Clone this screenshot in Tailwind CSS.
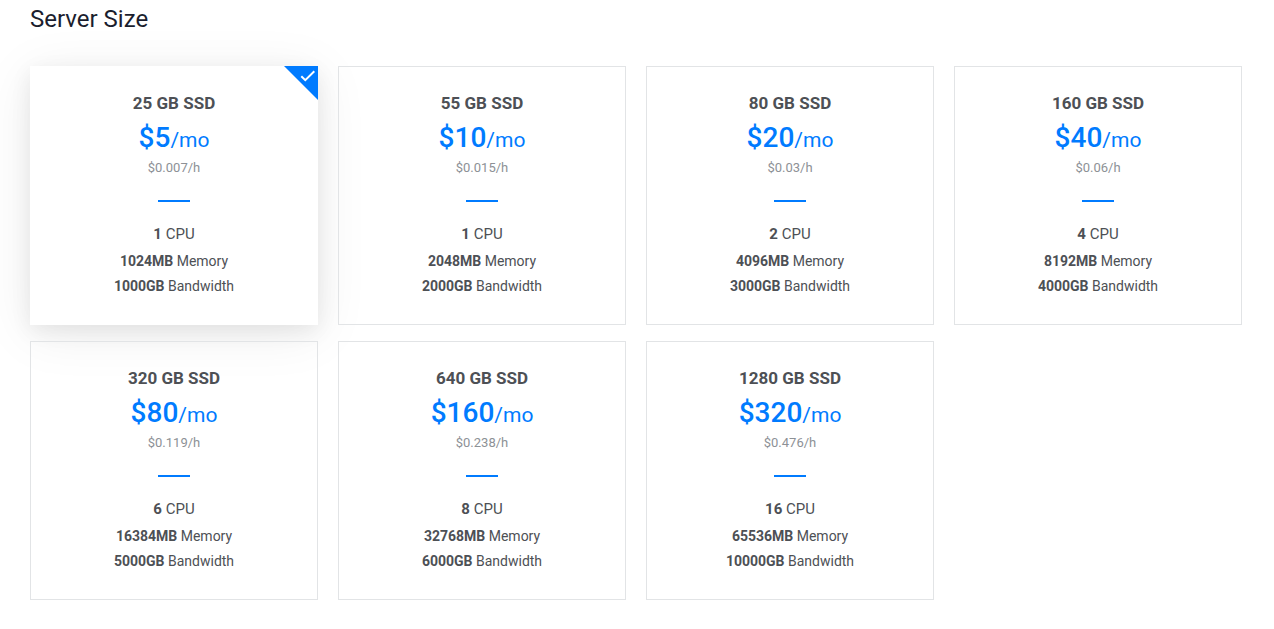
<!DOCTYPE html>
<html lang="en">
<head>
    <meta charset="UTF-8">
    <meta name="viewport" content="width=device-width, initial-scale=1.0">
    <title>Server Size</title>
    <script src="https://cdn.jsdelivr.net/npm/@tailwindcss/browser@4"></script>
</head>
<body class="bg-white font-[Roboto,sans-serif] text-[#4d5055]">
    <form class="pl-[30px] pr-8 pt-1 pb-7">
        <fieldset>
            <legend class="text-2xl leading-[30px] text-[#1b1e2e] mb-8">Server Size</legend>
            <div id="plans" class="grid grid-cols-4 gap-x-5 gap-y-4"></div>
        </fieldset>
    </form>

    <script>
        const plans = [
            { disk: 25, price: 5, hourly: '0.007', cpu: 1, memory: 1024, bandwidth: 1000 },
            { disk: 55, price: 10, hourly: '0.015', cpu: 1, memory: 2048, bandwidth: 2000 },
            { disk: 80, price: 20, hourly: '0.03', cpu: 2, memory: 4096, bandwidth: 3000 },
            { disk: 160, price: 40, hourly: '0.06', cpu: 4, memory: 8192, bandwidth: 4000 },
            { disk: 320, price: 80, hourly: '0.119', cpu: 6, memory: 16384, bandwidth: 5000 },
            { disk: 640, price: 160, hourly: '0.238', cpu: 8, memory: 32768, bandwidth: 6000 },
            { disk: 1280, price: 320, hourly: '0.476', cpu: 16, memory: 65536, bandwidth: 10000 }
        ];

        document.getElementById('plans').innerHTML = plans.map((plan, index) => `
            <label for="plan-${index}" class="relative flex flex-col items-center border border-[#e2e4e6] pt-6 pb-[25px] text-center cursor-pointer has-checked:border-white has-checked:bg-white has-checked:shadow-[0_8px_50px_rgba(0,0,0,0.08),0_6px_20px_rgba(0,0,0,0.07)]">
                <input type="radio" id="plan-${index}" name="plan" value="${plan.disk}" class="peer sr-only" ${index === 0 ? 'checked' : ''}>
                <!-- Selected corner -->
                <svg class="hidden peer-checked:block absolute -top-px -right-px w-[34px] h-[34px]" viewBox="0 0 34 34" fill="none" aria-hidden="true">
                    <path d="M0 0H34V34Z" fill="#007bff"/>
                    <path d="M17.3 10.2L21.3 14.2L30.3 5.2" stroke="#fff" stroke-width="2"/>
                </svg>
                <span class="text-[17px] leading-6 font-bold mb-1">${plan.disk} GB SSD</span>
                <span class="text-[21px] leading-[38px] text-[#007bff]"><span class="text-[28px] font-medium">$${plan.price}</span>/mo</span>
                <span class="text-[13px] leading-[18px] text-[#8d9196]">$${plan.hourly}/h</span>
                <span class="w-8 h-0.5 mt-[23px] mb-5 bg-[#007bff]"></span>
                <span class="text-[15px] leading-6 mb-[3px]"><b>${plan.cpu}</b> CPU</span>
                <span class="text-sm leading-[25px]"><b>${plan.memory}MB</b> Memory</span>
                <span class="text-sm leading-[25px]"><b>${plan.bandwidth}GB</b> Bandwidth</span>
            </label>
        `).join('');
    </script>
</body>
</html>
